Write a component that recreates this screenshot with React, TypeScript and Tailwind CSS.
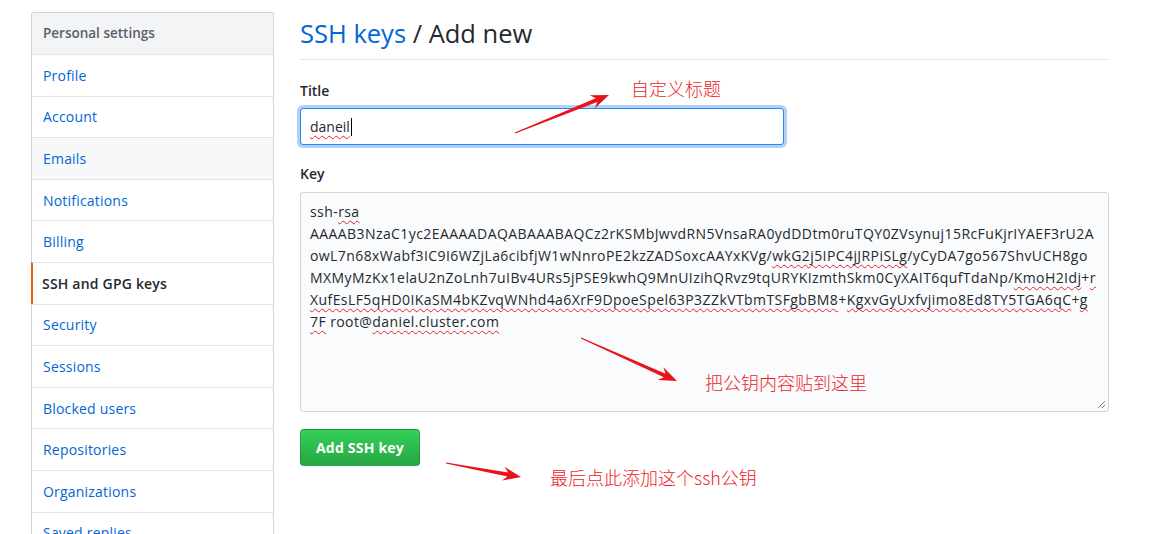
import React from "react";

const font = { fontFamily: '"Open Sans", "Noto Sans CJK SC", sans-serif' };

function arrowPoints(x1: number, y1: number, x2: number, y2: number, headLen = 18, headW = 7) {
  const dx = x2 - x1, dy = y2 - y1;
  const L = Math.hypot(dx, dy);
  const ux = dx / L, uy = dy / L;
  const nx = -uy, ny = ux;
  const p = (d: number, w: number) => `${(x1 + ux * d + nx * w).toFixed(1)},${(y1 + uy * d + ny * w).toFixed(1)}`;
  const pts = [
    p(0, 0.6),
    p(L - headLen * 0.75, 2),
    p(L - headLen, headW),
    p(L, 0),
    p(L - headLen, -headW),
    p(L - headLen * 0.75, -2),
    p(0, -0.6),
  ];
  return pts.join(" ");
}

const sq = "underline decoration-wavy decoration-[#e0242a] decoration-1 underline-offset-[3px]";

const items = [
  "Profile",
  "Account",
  "Emails",
  "Notifications",
  "Billing",
  "SSH and GPG keys",
  "Security",
  "Sessions",
  "Blocked users",
  "Repositories",
  "Organizations",
  "Saved replies",
];

export default function App() {
  return (
    <div className="relative w-[1156px] h-[534px] overflow-hidden bg-white text-[#24292e]" style={font}>
      <div className="flex gap-[26px] pl-[31px]">
        {/* Sidebar */}
        <div className="w-[243px] mt-[12px] shrink-0 border border-[#d1d5da] rounded-t-[3px] border-b-0">
          <div className="h-[41px] bg-[#f3f4f6] px-[11px] flex items-center text-[13.5px] font-semibold text-[#586069] rounded-t-[3px]">
            Personal settings
          </div>
          {items.map((it) => {
            const active = it === "SSH and GPG keys";
            const hover = it === "Emails";
            return (
              <div
                key={it}
                className={
                  "h-[41.6px] border-t border-[#e1e4e8] flex items-center text-[14px] tracking-[0.2px] " +
                  (active
                    ? "border-l-2 border-l-[#e36209] pl-[9px] text-[#24292e] font-semibold -ml-px"
                    : "px-[11px] text-[#0366d6] ") +
                  (hover ? " bg-[#f6f8fa]" : "")
                }
              >
                {it}
              </div>
            );
          })}
        </div>

        {/* Main */}
        <div className="w-[809px] pt-[15px]">
          <div className="border-b border-[#e1e4e8] pb-[8px]">
            <h1 className="text-[25.5px] leading-[36px] font-normal">
              <span className="text-[#0366d6]">SSH keys</span> / Add new
            </h1>
          </div>

          <div className="mt-[21px] text-[14px] leading-[20px] font-semibold">Title</div>
          <div className="mt-[7px] w-[484px] h-[37px] border border-[#2188ff] rounded-[3px] shadow-[0_0_0_3px_rgba(3,102,214,0.3)] bg-white flex items-center px-[9px] text-[14px]">
            <span className={sq}>daneil</span>
            <span className="inline-block w-px h-[18px] bg-black ml-px" />
          </div>

          <div className="mt-[19px] text-[14px] leading-[20px] font-semibold">Key</div>
          <div className="relative mt-[8px] h-[220px] border border-[#d1d5da] rounded-[3px] bg-[#fafbfc] px-[9px] py-[8px] text-[14px] leading-[22px] tracking-[0.42px] whitespace-pre text-[#24292e]">
            <div>ssh-<span className={sq}>rsa</span></div>
            <div>AAAAB3NzaC1yc2EAAAADAQABAAABAQCz2rKSMbJwvdRN5VnsaRA0ydDDtm0ruTQY0ZVsynuj15RcFuKjrIYAEF3rU2A</div>
            <div>
              owL7n68xWabf3IC9I6WZjLa6cibfjW1wNnroPE2kzZADSoxcAAYxKVg/<span className={sq}>wkG2j5IPC4jJRPiSLg</span>/yCyDA7go567ShvUCH8go
            </div>
            <div>
              MXMyMzKx1elaU2nZoLnh7uIBv4URs5jPSE9kwhQ9MnUIzihQRvz9tqURYKIzmthSkm0CyXAIT6qufTdaNp/<span className={sq}>KmoH2Idj</span>+<span className={sq}>r</span>
            </div>
            <div>
              <span className={sq}>XufEsLF5qHD0IKaSM4bKZvqWNhd4a6XrF9DpoeSpel63P3ZZkVTbmTSFgbBM8</span>+<span className={sq}>KgxvGyUxfvjimo8Ed8TY5TGA6qC</span>+<span className={sq}>g</span>
            </div>
            <div>
              <span className={sq}>7F</span> root@<span className={sq}>daniel.cluster.com</span>
            </div>
            <svg className="absolute right-[2px] bottom-[2px]" width="9" height="9" viewBox="0 0 9 9">
              <line x1="1" y1="8" x2="8" y2="1" stroke="#888" strokeWidth="1" />
              <line x1="5" y1="8" x2="8" y2="5" stroke="#888" strokeWidth="1" />
            </svg>
          </div>

          <button className="mt-[17px] h-[37px] px-[15px] rounded-[4px] border border-[rgba(27,31,35,0.2)] bg-gradient-to-b from-[#34d058] to-[#28a745] text-white text-[14px] font-bold tracking-[0.2px]">
            Add SSH key
          </button>
        </div>
      </div>

      {/* Annotations */}
      <svg className="absolute left-0 top-0 pointer-events-none" width="1156" height="534">
        <polygon points={arrowPoints(515, 133, 609, 95)} fill="#e8141b" />
        <polygon points={arrowPoints(581, 338, 677, 381)} fill="#e8141b" />
        <polygon points={arrowPoints(446, 463, 521, 477)} fill="#e8141b" />
      </svg>
      <div
        className="absolute left-[631px] top-[76px] text-[18px] leading-[24px] text-[#ee1c25] font-light"
        style={{ fontFamily: '"Noto Sans CJK SC", sans-serif' }}
      >
        自定义标题
      </div>
      <div
        className="absolute left-[705px] top-[370px] text-[18px] leading-[24px] text-[#ee1c25] font-light"
        style={{ fontFamily: '"Noto Sans CJK SC", sans-serif' }}
      >
        把公钥内容贴到这里
      </div>
      <div
        className="absolute left-[550px] top-[465px] text-[18px] leading-[24px] text-[#ee1c25] font-light"
        style={{ fontFamily: '"Noto Sans CJK SC", sans-serif' }}
      >
        最后点此添加这个ssh公钥
      </div>
    </div>
  );
}
